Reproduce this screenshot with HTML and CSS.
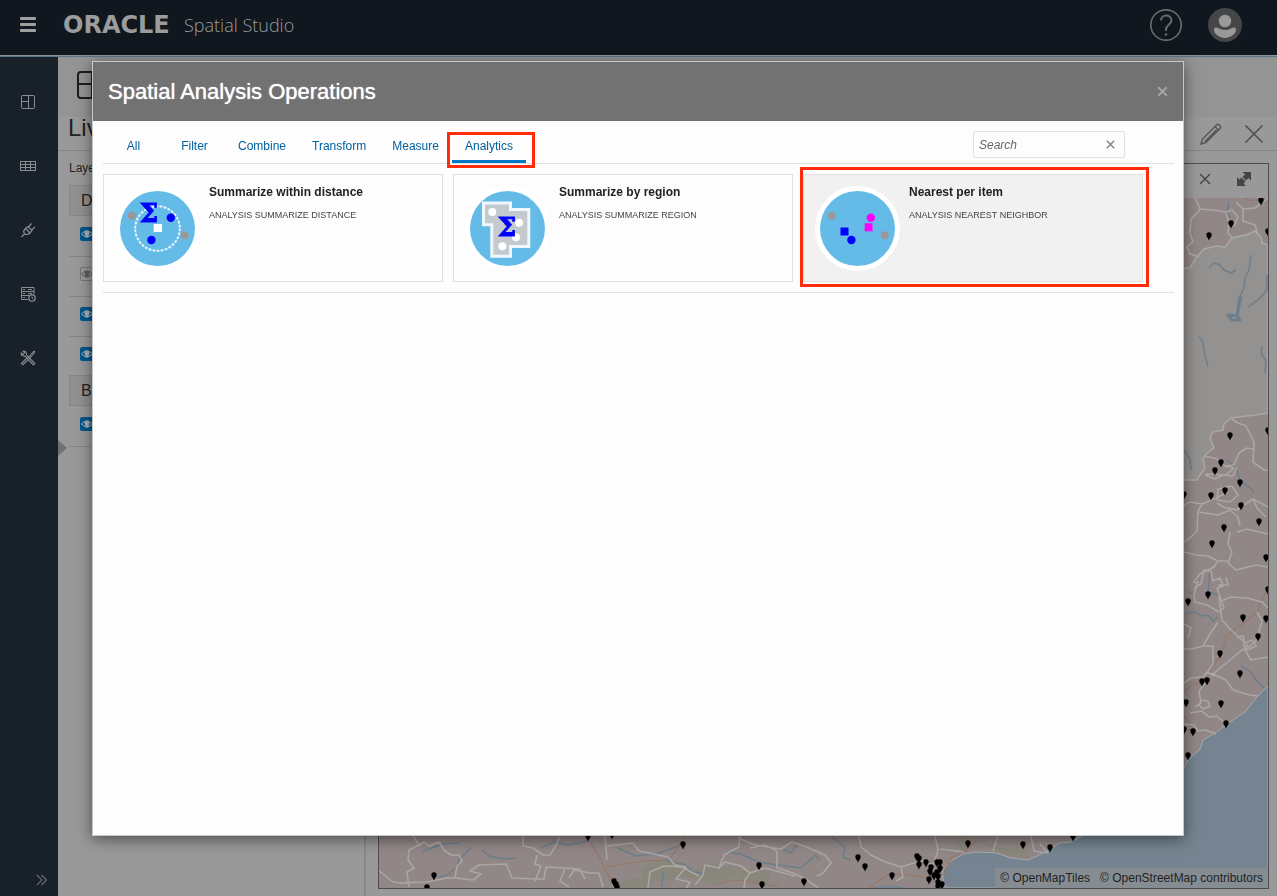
FILE: index.html
```html
<!DOCTYPE html>
<html lang="en">
<head>
<meta charset="utf-8">
<title>Spatial Studio</title>
<link rel="stylesheet" href="styles.css">
</head>
<body>
<div class="app">
  <header class="topbar">
    <button class="icon-btn menu-btn" aria-label="Menu"><svg width="16" height="16" viewBox="0 0 16 16" fill="#a0a0a0"><rect y="0" width="16" height="3" rx="1"/><rect y="6" width="16" height="3" rx="1"/><rect y="12" width="16" height="3" rx="1"/></svg></button>
    <div class="brand"><span class="brand-name">ORACLE</span><span class="brand-product">Spatial Studio</span></div>
    <button class="icon-btn help-btn" aria-label="Help"><svg width="32" height="32" viewBox="0 0 32 32" fill="none" stroke="#66696d" stroke-width="1.7"><circle cx="16" cy="16" r="15.2"/><path d="M11 11.5C11 5 21.500 5 21.500 11.300C21.500 15.500 16 15.500 16 20.500V22" stroke-width="2"/><circle cx="16" cy="25.500" r="1.300" fill="#66696d" stroke="none"/></svg></button>
    <button class="icon-btn" aria-label="Account"><svg width="34" height="34" viewBox="0 0 34 34"><circle cx="17" cy="17" r="17" fill="#444648"/><circle cx="17" cy="13" r="6.200" fill="#999"/><path d="M6 22C6 18.500 9 19.500 11 20.500C15 22.500 19 22.500 23 20.500C25 19.500 28 18.500 28 22C28 26 22 30 17 30S6 26 6 22Z" fill="#999"/></svg></button>
  </header>
  <div class="main">
    <nav class="sidebar">
      <div class="nav-list">
        <button class="icon-btn" aria-label="Projects"><svg width="16" height="16" viewBox="0 0 16 16" fill="none" stroke="#8b8e91"><rect x="1.500" y="1.500" width="13" height="13" rx="1"/><path d="M8.500 1.500v13M1.500 7.500h7"/></svg></button>
        <button class="icon-btn" aria-label="Datasets"><svg width="16" height="16" viewBox="0 0 16 16" fill="none" stroke="#8b8e91"><rect x=".5" y="3.500" width="15" height="9"/><path d="M.5 6.500h15M.5 9.500h15M5.500 3.500v9M10.500 3.500v9"/></svg></button>
        <button class="icon-btn" aria-label="Connections"><svg width="16" height="16" viewBox="0 0 16 16" fill="none" stroke="#8b8e91" stroke-width="1.200"><path d="M1.500 15l3.200-3.300M5 6l5.500 5.500M5.500 6.500C3 9 3.500 10 4.500 11.700C6.500 13 8 13 10 11M5.500 6.500L8 4.500L12 8.500L10 11M8.500 5L11.500 1.500M11.500 8L15 5"/></svg></button>
        <button class="icon-btn" aria-label="Jobs"><svg width="16" height="16" viewBox="0 0 16 16" fill="none" stroke="#8b8e91"><path d="M8 13.500H1.500V1.500h12.500v7M1.500 5.500H14M1.500 9.500H9M3 3.500h2M8 3.500h4M3 7.500h2M8 7.500h4M3 11.500h2"/><circle cx="12" cy="12" r="3.200" fill="#18202a" stroke-width="1.300"/><path d="M12 10.500V12l1.300 1"/></svg></button>
        <button class="icon-btn" aria-label="Tools"><svg width="16" height="16" viewBox="0 0 16 16" fill="none" stroke="#8b8e91" stroke-width="1.100"><path d="M14 1L8 8M15 2L9 9M14 1l1 1M7 8l-5.500 5.300l1.300 1.400L8.500 9.500M5 6L13 14.500C14 15 15 14 14.500 13L6.500 5M5 6C2 6.500 1 5 1.300 3L3 4.500L4.700 3L3.300 1.300C6 .8 7 3 6.500 5"/></svg></button>
      </div>
      <button class="icon-btn expand-btn" aria-label="Expand navigation"><svg width="12" height="12" viewBox="0 0 12 12" fill="none" stroke="#65696e" stroke-width="1.200"><path d="M1 1l5 5l-5 5M5.500 1l5 5l-5 5"/></svg></button>
    </nav>
    <section class="work">
      <div class="toolbar"><svg width="28" height="28" viewBox="0 0 28 28" fill="none" stroke="#1c1c1c" stroke-width="2"><rect x="1" y="1" width="26" height="26" rx="3"/><path d="M1 13h14M15 1v26"/></svg></div>
      <div class="titlebar">
        <h1 class="project-title">Live</h1>
        <button class="icon-btn" aria-label="Edit"><svg width="22" height="22" viewBox="0 0 22 22" fill="none" stroke="#555" stroke-width="1.400"><path d="M1 21l1.500-5L16.500 2C18.500 0 22 3.500 20 5.500L6 19.500ZM15 3.500l3.500 3.500M5 18.500L16.500 7"/></svg></button>
        <button class="icon-btn" aria-label="Close project"><svg width="20" height="20" viewBox="0 0 20 20" stroke="#4c4c4c" stroke-width="1.500"><path d="M1.500 1.500l17 17M18.500 1.500l-17 17"/></svg></button>
      </div>
      <div class="workspace">
        <aside class="layers">
          <span class="collapse"></span>
          <h2 class="layers-title">Layers</h2>
          <div class="group">Data</div>
          <div class="rows">
            <button class="row" aria-label="Layer 1"><span class="eye"><svg width="12" height="8" viewBox="0 0 12 8"><use href="#eye"/></svg></span></button>
            <button class="row" aria-label="Layer 2"><span class="eye off"><svg width="12" height="8" viewBox="0 0 12 8"><use href="#eye"/></svg></span></button>
            <button class="row" aria-label="Layer 3"><span class="eye"><svg width="12" height="8" viewBox="0 0 12 8"><use href="#eye"/></svg></span></button>
            <button class="row last" aria-label="Layer 4"><span class="eye"><svg width="12" height="8" viewBox="0 0 12 8"><use href="#eye"/></svg></span></button>
          </div>
          <div class="group">Basemap</div>
          <div class="rows"><button class="row" aria-label="Basemap layer"><span class="eye"><svg width="12" height="8" viewBox="0 0 12 8"><use href="#eye"/></svg></span></button></div>
        </aside>
        <div class="map-area">
          <div class="map-card">
            <div class="map-head">
              <button class="icon-btn" aria-label="Close map"><svg width="12" height="12" viewBox="0 0 12 12" stroke="#444" stroke-width="1.400"><path d="M1 1l10 10M11 1L1 11"/></svg></button>
              <button class="icon-btn" aria-label="Maximize map"><svg width="16" height="16" viewBox="0 0 16 16" fill="#444"><path d="M15 1H6.500L9 3.500L6.500 6L10 9.500L12.500 7L15 9.500ZM1 15V6L3.500 8.500L5.500 6.500L9.500 10.500L7.500 12.500L10 15Z"/></svg></button>
            </div>
            <div class="map-body">
              <svg class="map" viewBox="378 198 890 690" preserveAspectRatio="xMaxYMax slice">
                <defs>
                  <g id="eye"><path d="M.5 4Q6-2.500 11.500 4Q6 9.500 .5 4Z" fill="none" stroke="currentColor"/><path d="M3.500 1.500Q6 .5 8.500 1.500Q9 5.500 6 6.500Q3 5.500 3.500 1.500Z" fill="currentColor"/><path d="M1.500 4.500Q6 8.500 10.500 4.500Q6 11 1.500 4.500Z" fill="currentColor"/></g>
                  <path id="pin" d="M0 4.500C-.8 2-2.700 1-2.700-1A2.700 2.700 0 0 1 2.700-1C2.700 1 .8 2 0 4.500Z"/>
                </defs>
                <rect x="378" y="198" width="890" height="690" fill="#918786"/>
                <path d="M1170 269L1190 268L1196 258L1204 249L1216 246L1225 247L1232 238L1246 235L1255 231L1261 237L1262 243L1268 245V413L1256 415L1246 416L1231 418L1224 424L1223 430L1213 432L1210 438L1214 448L1206 454L1203 459L1205 468L1200 475L1197 480L1170 480Z" fill="#949290" stroke="#aaa8a7" stroke-width="1.500"/>
                <path d="M1268 686L1256 698L1245 712L1230 722L1215 733L1203 740L1200 749L1188 760L1184 768L1090 832L1071 842L1060 843L1047 851L1029 860L1011 858L996 853L976 852L963 854L951 861L943 870L943 880L946 888H1268Z" fill="#758490" stroke="#a4aaad"/>
                <path d="M870 888Q888 883 908 888Z" fill="#758490"/>
                <g fill="#89877b"><path d="M642 867L660 860L682 862L700 872L716 864L738 867L742 875L724 879L715 884L684 876L664 882L642 879ZM698 869L710 862L738 868L770 872L767 885L749 884L735 874L720 871ZM954 836L966 836L968 851L960 850ZM985 843L1000 848L1025 850L1030 858L1020 858L1000 852L989 848ZM614 884L633 878L654 881L650 888H614Z"/></g>
                <g fill="none" stroke="#6c7e8c" stroke-width="1.500" stroke-linejoin="round">
                  <path d="M1209 268l5-5l6 2l4 5l7 3l5-3M1251 255l-2 15l-4 8l-1 10l-4 8M1267 275v15l-8 9l-11 8M1199 336l4 7l2 12l3 12M1262 346l-1 7l5 8l-1 12M1184 450l6 9l1 11"/>
                  <path d="M1240 296l-3 20l-9-1l4 5h8l-3-5l4-18" stroke-width="3"/>
                  <path d="M1229 202l-2 10l3 5M1227 460l10 10l3 11l8 5l6 6M1187 613l8-1l6 4l7-1l5 6l5-4M1210 572l-2 20l11 3M1241 666l9 5l6 9l8 8M1188 591l6 4M422 852l20-8l18-1M471 848l-12 11l-2 8l-10 8l-8 2M482 850l7 6l15 3l11-1M540 848l14-6l14 3l20-4M618 848l18 8l23-3l20-7M665 860l20 5l8 7l10 1M726 852l15 2l17 8l14 2M771 864l16 2l14 2l15-13l3 5M798 843l-7 10l-8-4M831 836l14 11l-2 10l8 3M663 872l-1 15"/>
                </g>
                <g fill="none" stroke="#977766" stroke-width="1.200">
                  <path d="M1238 196l14 5l16-3M1267 590l-7 14l-2 8l-20 15l-12 9l-1 8l-7 15l-7 10l-2 7M1184 692l8-7l14-4M1184 716l6 8v12M590 842l8 12l6 13l11 20M604 867l40-6l23-1l8-8l12-18M868 888l20-13l14-1l27 4l15-4l7-16l11-5l15-13M715 885l12-4l14-1l25 5l13 1M1183 700l8 10"/>
                </g>
                <g fill="none" stroke="#aaa6a5" stroke-width="1.600" stroke-linejoin="round">
                  <path d="M1195 198l5 10l-1 3l-8 8l-1 14l3 9l-6 5l3 7l9 3M1200 209l12 1l14 2l6-2l6 7l-4 9M1236 202l7 7l12-1l13-10M1226 213l3 10l-1 10l5 6M1243 209v12l12 4l3 10M1232 419l6 4l8 3l4 8l4 8l-1 20l11 8h15M1184 506l5-4l13 2l12-5l14-7M1205 456l12 3l8 7l9 2l-8 7l-20-1M1225 466l9-1l5-12l8-5l6 1M1205 475l10 4l8-4l10 1l4-9M1203 503l-5 8l-1 20l-6 6l-7 5M1218 489l14-3l6 9l-8 7l-13-2ZM1217 503l6 4l14 3l16-11l15 8M1198 512l20 3l12-5l8 7l2 9M1253 499l4 9l9 9M1237 532l10-3l8 2l13 3M1230 532l-2 12l4 8l-4 11l8 7l20-5l12 2M1184 552l12 3l12 1l10 5h10M1193 583l7-9l14-7l3-5M1195 583l3-1l-4 13l1 7l12 3l12 7l5-4l-7-20l6-2l-3-8l-7 3l-2-10l-7-1l-3 14l-7 4M1218 585h10l-2-8M1221 601l10-4l16 1l15 4l6 6M1219 597l3 23l9 10l8 7l9 9M1184 649h8l11-3l7-12l8-12M1184 624l7 4l-3 10M1203 646h10v18l-7 10M1213 674l34-28M1257 612l5 9l-6 20l-11 9l6 10l17-3M1211 673l15 7l7 10l17 5l8 1M1184 683l7-5l12-1l4-5l7 4M1206 682l-7 9l2 12l-6 4M1190 713l12-2l7 6l9-1M1218 717l8 7M1184 724l10 1l4 6l8-1l10 4"/>
                  <path d="M1237 637l6-1l2 7l8-3l3 6l-9 4l-4-6M1200 700l8 1l2 5l-7 3l-4-4"/>
                  <path d="M413 836l6 9l-10 5l-1 10l6 8l-7 4l2 15M418 846l6-4l5 4l10-4l5 8l7 5h8l3 6l-5 5l-2 12l18 2l8-6l-11-3l9-6l27-1l6 14l24 1h8l2-12l34 2l5 10M378 870l15 12l7 1l27-1l20-4h12M523 836v10l10 2l10 7h7l5-8l5-10M537 855l-2 9l6 2l-6 15M565 869l-5 12l9 6M569 878l5-8l16 3h9l4 14M605 836l2 24M607 846l26-3l6 8l15 3l14 3l7 8l11 2l-10 12l14 3l-6 10M648 888l2-16l14-6l19 1l8 5l8 4M740 836l-1 11l-10 5l-5 3l-5 13l-14-3l-2 10l-8 10M719 868l6-6l16 4l9 7l-5 7l-1 8M750 873l15-5l30 8M750 848l15-3l12 6v17l16 5l13 6l12 9M738 838l17 7l26 4l11-7l17 6l16 7l6 8l-8 10l-6 3M859 836l2 11l10 8l12 6l18 6l2 10l-7 4M901 867l20-6l10 3l12-2M935 836l3 14l-4 13M940 849l24 3M998 836l-5 15M1031 836l3 15l14 2l-8-9"/>
                </g>
                <g class="pins">
                  <use href="#pin" x="1261" y="201"/><use href="#pin" x="1231" y="224"/><use href="#pin" x="1209" y="236"/><use href="#pin" x="1268" y="232"/><use href="#pin" x="1230" y="436"/><use href="#pin" x="1268" y="431"/><use href="#pin" x="1221" y="463"/><use href="#pin" x="1215" y="471"/><use href="#pin" x="1240" y="483"/><use href="#pin" x="1225" y="491"/><use href="#pin" x="1211" y="496"/><use href="#pin" x="1184" y="495"/><use href="#pin" x="1241" y="506"/><use href="#pin" x="1259" y="522"/><use href="#pin" x="1224" y="528"/>
                  <use href="#pin" x="1212" y="544"/><use href="#pin" x="1266" y="558"/><use href="#pin" x="1268" y="590"/><use href="#pin" x="1208" y="595"/><use href="#pin" x="1188" y="602"/><use href="#pin" x="1243" y="618"/><use href="#pin" x="1266" y="619"/><use href="#pin" x="1258" y="637"/><use href="#pin" x="1220" y="654"/><use href="#pin" x="1240" y="674"/><use href="#pin" x="1202" y="682"/><use href="#pin" x="1207" y="681"/><use href="#pin" x="1186" y="703"/><use href="#pin" x="1221" y="704"/><use href="#pin" x="1226" y="724"/><use href="#pin" x="1193" y="732"/><use href="#pin" x="1184" y="730"/><use href="#pin" x="1188" y="756"/>
                  <use href="#pin" x="588" y="837"/><use href="#pin" x="612" y="835"/><use href="#pin" x="683" y="845"/><use href="#pin" x="434" y="876"/><use href="#pin" x="427" y="888"/><use href="#pin" x="614" y="882"/><use href="#pin" x="616" y="885"/><use href="#pin" x="617" y="888"/><use href="#pin" x="759" y="866"/><use href="#pin" x="762" y="885"/>
                  <use href="#pin" x="858" y="858"/><use href="#pin" x="865" y="867"/><use href="#pin" x="804" y="882"/><use href="#pin" x="892" y="876"/><use href="#pin" x="917" y="857"/><use href="#pin" x="919" y="859"/><use href="#pin" x="919" y="865"/><use href="#pin" x="926" y="863"/><use href="#pin" x="931" y="868"/><use href="#pin" x="930" y="872"/><use href="#pin" x="937" y="863"/><use href="#pin" x="940" y="863"/><use href="#pin" x="940" y="869"/><use href="#pin" x="937" y="873"/><use href="#pin" x="934" y="876"/><use href="#pin" x="938" y="877"/><use href="#pin" x="929" y="880"/><use href="#pin" x="938" y="883"/><use href="#pin" x="942" y="885"/><use href="#pin" x="938" y="887"/><use href="#pin" x="968" y="844"/><use href="#pin" x="1023" y="845"/><use href="#pin" x="1050" y="848"/><use href="#pin" x="1073" y="837"/>
                </g>
              </svg>
              <div class="credits"><a href="#">© OpenMapTiles</a><a href="#">© OpenStreetMap contributors</a></div>
            </div>
          </div>
        </div>
      </div>
    </section>
  </div>
</div>

<div class="dialog" role="dialog" aria-labelledby="dialog-title">
  <div class="dialog-head">
    <h2 class="dialog-title" id="dialog-title">Spatial Analysis Operations</h2>
    <button class="icon-btn" aria-label="Close"><svg width="11" height="11" viewBox="0 0 11 11" stroke="#a2a4a6" stroke-width="2"><path d="M1.200 1.200l8.600 8.600M9.800 1.200l-8.600 8.600"/></svg></button>
  </div>
  <div class="dialog-body">
    <div class="tabrow">
      <div class="tabs" role="tablist">
        <button class="tab" role="tab">All</button>
        <button class="tab" role="tab">Filter</button>
        <button class="tab" role="tab">Combine</button>
        <button class="tab" role="tab">Transform</button>
        <button class="tab" role="tab">Measure</button>
        <button class="tab active" role="tab" aria-selected="true">Analytics</button>
      </div>
      <div class="search">
        <input class="search-input" type="text" placeholder="Search" aria-label="Search">
        <button class="icon-btn" aria-label="Clear search"><svg width="9" height="9" viewBox="0 0 9 9" stroke="#85888b" stroke-width="1.500"><path d="M.8.8l7.400 7.400M8.200.8L.8 8.200"/></svg></button>
      </div>
    </div>
    <div class="cards">
      <button class="card">
        <svg class="card-icon" width="85" height="85" viewBox="0 0 85 85"><circle cx="42.500" cy="42.500" r="42.500" fill="#fff"/><circle cx="42.500" cy="42.500" r="37.500" fill="#64bbe8"/><circle cx="42.500" cy="42.500" r="22.300" fill="none" stroke="#e8f5fc" stroke-width="2" stroke-dasharray="2.800 1.300"/><g fill="#999"><circle cx="16.800" cy="29.800" r="4"/><circle cx="69.700" cy="49.200" r="4"/></g><g fill="#00f"><circle cx="55.800" cy="31.800" r="4.200"/><circle cx="36.400" cy="54" r="4.200"/></g><path d="M38.700 38h8.300v8h-8.300z" fill="#fff"/><text class="sigma" x="34" y="36" text-anchor="middle">Σ</text></svg>
        <span class="card-text"><span class="card-title">Summarize within distance</span><span class="card-tags">ANALYSIS SUMMARIZE DISTANCE</span></span>
      </button>
      <button class="card">
        <svg class="card-icon" width="85" height="85" viewBox="0 0 85 85"><circle cx="42.500" cy="42.500" r="42.500" fill="#fff"/><circle cx="42.500" cy="42.500" r="37.500" fill="#64bbe8"/><path d="M18.500 17H45.500V23.500H63.800V60.500H45.500V70.200H26.800V38.800H18.500Z" fill="#c5cace" stroke="#eff8fd" stroke-width="3"/><g fill="#fff"><circle cx="27.300" cy="26" r="4"/><circle cx="54" cy="36.700" r="4"/><circle cx="51" cy="51.300" r="4"/><circle cx="37.300" cy="60.300" r="4"/><circle cx="40" cy="35" r="3"/></g><text class="sigma" x="42" y="50" text-anchor="middle">Σ</text></svg>
        <span class="card-text"><span class="card-title">Summarize by region</span><span class="card-tags">ANALYSIS SUMMARIZE REGION</span></span>
      </button>
      <button class="card selected">
        <svg class="card-icon" width="85" height="85" viewBox="0 0 85 85"><circle cx="42.500" cy="42.500" r="42.500" fill="#fff"/><circle cx="42.500" cy="42.500" r="37.500" fill="#64bbe8"/><g fill="#999"><circle cx="16.800" cy="29.800" r="4"/><circle cx="69.700" cy="49.200" r="4"/></g><g fill="#f0f"><circle cx="55.800" cy="31.800" r="4.200"/><path d="M49.700 37.300h7.800v8h-7.800z"/></g><g fill="#00f"><circle cx="36.400" cy="54" r="4.200"/><path d="M25.500 41.500h8v8h-8z"/></g></svg>
        <span class="card-text"><span class="card-title">Nearest per item</span><span class="card-tags">ANALYSIS NEAREST NEIGHBOR</span></span>
      </button>
    </div>
  </div>
</div>
</body>
</html>
```

FILE: styles.css
```css
* { box-sizing: border-box; }
body {
  margin: 0;
  font-family: "Liberation Sans", Arial, sans-serif;
  font-size: 12px;
  color: #222;
  background: #999;
}
button { font: inherit; border: 0; margin: 0; }
.icon-btn { display: flex; align-items: center; justify-content: center; padding: 0; background: none; }

.app { display: flex; flex-direction: column; height: 100vh; }
.topbar {
  display: flex;
  align-items: center;
  height: 57px;
  padding: 0 35px 6px 20px;
  background: #10171f;
  border-bottom: 1px solid #5c7587;
  box-shadow: inset 0 -1px #909396;
}
.brand { display: flex; align-items: center; flex: 1; margin-left: 27px; color: #9a9c9e; }
.brand-name { width: 121px; font: bold 24px/28px "DejaVu Sans", sans-serif; }
.brand-product { font: 300 18px/28px "Open Sans", sans-serif; }
.help-btn { margin-right: 26px; }

.main { display: flex; flex: 1; min-height: 0; }
.sidebar {
  display: flex;
  flex-direction: column;
  justify-content: space-between;
  width: 58px;
  padding: 37px 10px 10px 20px;
  background: #18202a;
}
.nav-list { display: flex; flex-direction: column; align-items: flex-start; gap: 48px; }
.expand-btn { align-self: flex-end; }

.work { display: flex; flex-direction: column; flex: 1; min-width: 0; }
.toolbar { height: 60px; padding: 14px 19px; background: #949494; }
.titlebar {
  display: flex;
  align-items: center;
  gap: 22px;
  height: 34px;
  padding: 0 13px 0 10px;
  border-bottom: 1px solid #858585;
}
.project-title { flex: 1; margin: 0; font-size: 24px; font-weight: 400; line-height: 24px; padding-bottom: 12px; }
.workspace { display: flex; flex: 1; min-height: 0; }
.layers { position: relative; width: 308px; padding: 9px 11px; border-right: 2px solid #888; }
.layers-title { margin: 0 0 9px; font-size: 12px; font-weight: 400; line-height: 16px; }
.group {
  height: 31px;
  padding: 0 11px;
  font-size: 16px;
  line-height: 29px;
  background: #919191;
  border: 1px solid #878787;
}
.rows { padding-top: 1px; }
.row {
  display: flex;
  align-items: center;
  width: 100%;
  height: 40px;
  padding: 0 11px 5px;
  background: none;
  border-bottom: 1px solid #858585;
}
.row.last { height: 38px; border-bottom: 0; }
.eye {
  display: flex;
  align-items: center;
  justify-content: center;
  width: 14px;
  height: 14px;
  color: #b0b4b8;
  background: #00568d;
  border-radius: 2px;
}
.eye svg { flex: none; }
.eye.off { color: #5c5c5c; background: #999; border: 1px solid #777; }
.collapse {
  position: absolute;
  left: 0;
  top: 289px;
  border-left: 9px solid #717171;
  border-top: 8px solid transparent;
  border-bottom: 8px solid transparent;
}

.map-area { display: flex; flex: 1; min-width: 0; padding: 12px 8px 7px 12px; }
.map-card { display: flex; flex-direction: column; flex: 1; border: 1px solid #4d4d4d; }
.map-head { display: flex; align-items: center; justify-content: flex-end; gap: 25px; height: 34px; padding: 0 16px 4px; }
.map-body { position: relative; flex: 1; min-height: 0; }
.map { position: absolute; inset: 0; width: 100%; height: 100%; }
.credits {
  position: absolute;
  right: 0;
  bottom: 0;
  display: flex;
  gap: 10px;
  padding: 0 5px;
  line-height: 20px;
  background: #858d93;
}
.credits a { color: #222; text-decoration: none; }

.dialog {
  position: fixed;
  inset: 61px 93px 60px 92px;
  display: flex;
  flex-direction: column;
  background: #fdfdfd;
  border: 1px solid #c6c8c8;
  box-shadow: 0 3px 14px rgba(0, 0, 0, .5);
}
.dialog-head {
  display: flex;
  align-items: center;
  justify-content: space-between;
  height: 59px;
  padding: 0 15px;
  background: #727272;
}
.dialog-title { margin: 0; color: #fff; font-size: 22px; font-weight: 400; line-height: 28px; text-shadow: 0 0 1px #fff; }
.dialog-body { padding: 0 9px 0 10px; }
.tabrow {
  display: flex;
  align-items: flex-start;
  justify-content: space-between;
  height: 43px;
  border-bottom: 1px solid #dfe0e0;
}
.tabs { display: flex; }
.tab {
  position: relative;
  min-width: 61px;
  height: 42px;
  padding: 10px 13px 0;
  background: none;
  border-bottom: 3px solid transparent;
  color: #00619e;
  font-size: 12px;
  line-height: 16px;
}
.tab.active { border-bottom-color: #0077c2; }
.tab.active::after {
  content: "";
  position: absolute;
  inset: 11px -9px -8px -5px;
  border: 3px solid #ff2b0a;
}
.search {
  display: flex;
  align-items: center;
  width: 152px;
  height: 27px;
  margin: 10px 49px 0 0;
  padding: 0 9px 0 5px;
  border: 1px solid #dfe0e0;
  border-radius: 2px;
}
.search-input { flex: 1; min-width: 0; padding: 0; border: 0; outline: 0; background: none; font: italic 12px/16px "Liberation Sans", Arial, sans-serif; }
.search-input::placeholder { color: #666; opacity: 1; }
.cards { display: flex; flex-wrap: wrap; gap: 10px; padding: 10px 0; border-bottom: 1px solid #dfe0e0; }
.card {
  position: relative;
  display: flex;
  gap: 9px;
  width: 340px;
  height: 108px;
  padding: 11px;
  text-align: left;
  color: #222;
  background: #fdfdfd;
  border: 1px solid #dfe0e0;
}
.card.selected { background: #f1f1f1; }
.card.selected::after {
  content: "";
  position: absolute;
  inset: -8px -7px -6px -4px;
  border: 3px solid #ff2b0a;
}
.card-icon { flex: none; }
.card-text { display: flex; flex-direction: column; gap: 8px; margin-top: -2px; }
.card-title { font-size: 12px; font-weight: 700; line-height: 16px; }
.card-tags { font-size: 9px; line-height: 14px; color: #444; }
.sigma { font: bold 26px "DejaVu Serif", serif; fill: #00f; stroke: #00f; stroke-width: 1px; }
```
